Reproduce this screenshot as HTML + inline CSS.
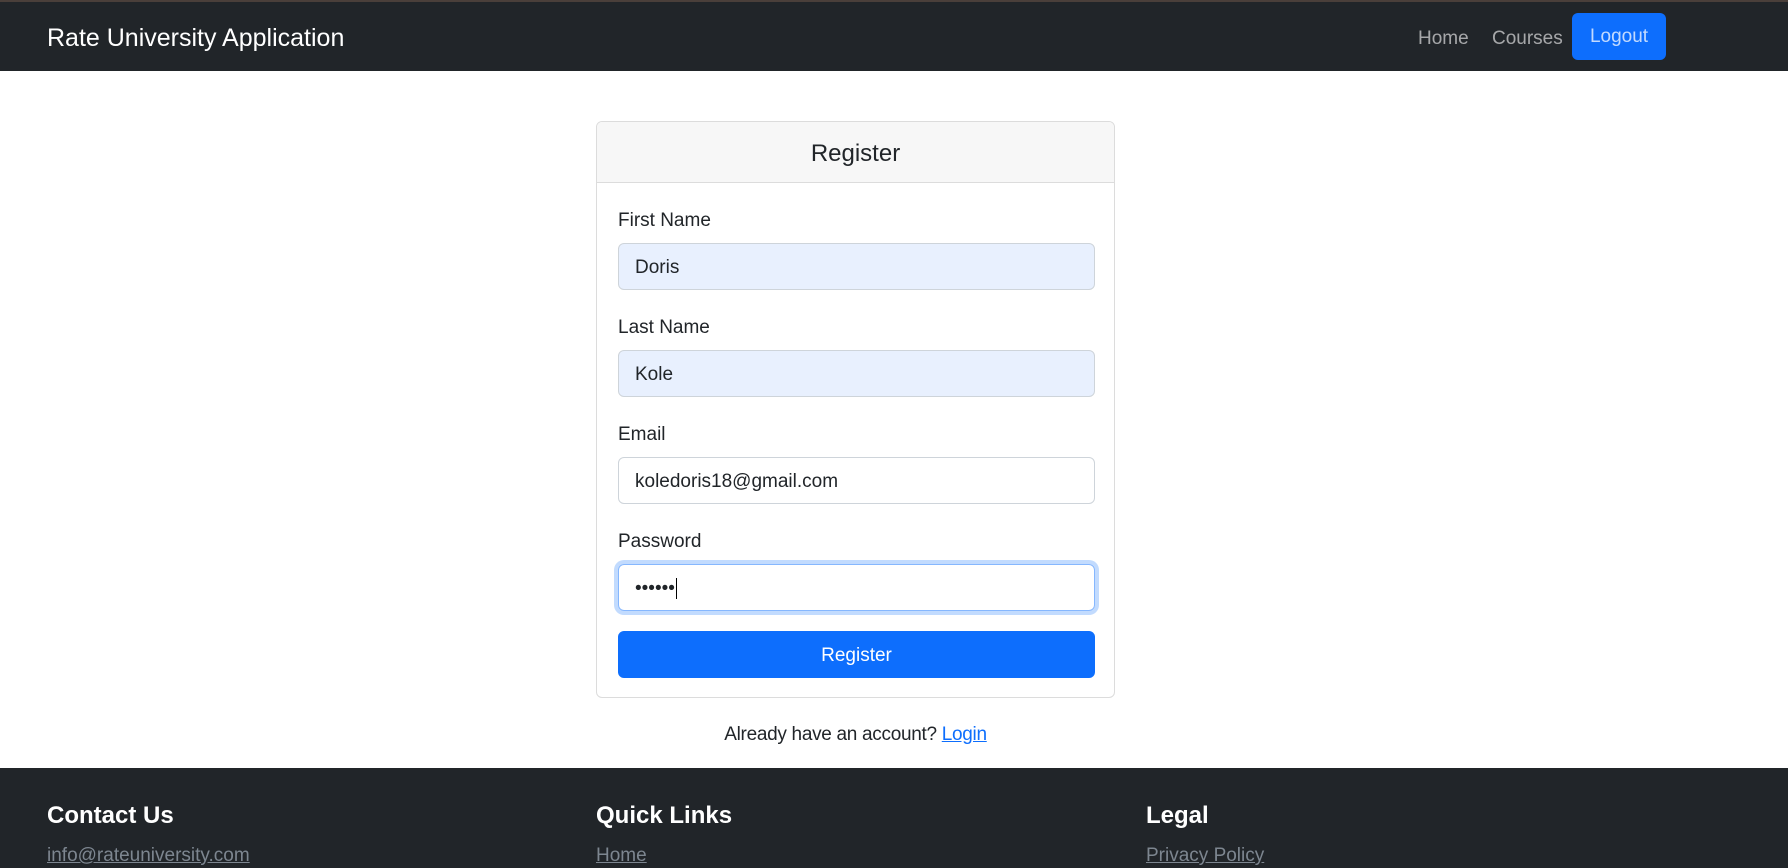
<!DOCTYPE html>
<html><head><meta charset="utf-8"><style>
*{box-sizing:border-box;margin:0;padding:0}
body{width:1788px;height:868px;overflow:hidden;font-family:"Liberation Sans",sans-serif;color:#212529;background:#fff;position:relative}
.nav{position:absolute;left:0;top:0;width:1788px;height:71px;background:#212529;border-top:2px solid #4a3f3a}
.brand{position:absolute;left:47px;top:22px;font-size:25px;color:#fff}
.nl{position:absolute;top:26px;font-size:19px;color:rgba(255,255,255,.6)}
.logout{position:absolute;left:1572px;top:11px;width:94px;height:47px;background:#0d6efd;border-radius:6px;color:rgba(255,255,255,.75);font-size:19px;line-height:47px;text-align:center}
.card{position:absolute;left:596px;top:121px;width:519px;height:577px;border:1px solid #dcdcdc;border-radius:6px;overflow:hidden}
.ch{height:61px;background:#f7f7f7;border-bottom:1px solid #dcdcdc;text-align:center;font-size:24px;line-height:64px}
.lbl{position:absolute;left:21px;font-size:19px}
.inp{position:absolute;left:21px;width:477px;height:47px;border:1px solid #ced4da;border-radius:6px;font-size:19px;line-height:47px;padding-left:16px;color:#212529}
.af{background:#e8f0fe}
.focus{border-color:#86b7fe;box-shadow:0 0 0 4px #c2dbfe}
.btn{position:absolute;left:21px;top:509px;width:477px;height:47px;background:#0d6efd;border-radius:6px;color:#fff;font-size:19px;line-height:50px;text-align:center}
.al{position:absolute;left:596px;width:519px;top:724px;text-align:center;font-size:19px;letter-spacing:-0.3px;white-space:nowrap}
.al a{color:#0d6efd;text-decoration:underline}
.foot{position:absolute;left:0;top:768px;width:1788px;height:100px;background:#212529}
.fh{position:absolute;top:34px;font-size:24px;font-weight:bold;color:#fff}
.fl{position:absolute;top:77px;font-size:19px;color:#7d8690;text-decoration:underline}
</style></head><body>
<div class="nav">
<div class="brand">Rate University Application</div>
<div class="nl" style="left:1418px">Home</div>
<div class="nl" style="left:1492px">Courses</div>
<div class="logout">Logout</div>
</div>
<div class="card">
<div class="ch">Register</div>
<div class="lbl" style="top:88px">First Name</div>
<div class="inp af" style="top:121px">Doris</div>
<div class="lbl" style="top:195px">Last Name</div>
<div class="inp af" style="top:228px">Kole</div>
<div class="lbl" style="top:302px">Email</div>
<div class="inp" style="top:335px">koledoris18@gmail.com</div>
<div class="lbl" style="top:409px">Password</div>
<div class="inp focus" style="top:442px">••••••<span style="border-left:1px solid #000;margin-left:1px"></span></div>
<div class="btn">Register</div>
</div>
<div class="al">Already have an account? <a>Login</a></div>
<div class="foot">
<div class="fh" style="left:47px">Contact Us</div>
<div class="fh" style="left:596px">Quick Links</div>
<div class="fh" style="left:1146px">Legal</div>
<div class="fl" style="left:47px">info@rateuniversity.com</div>
<div class="fl" style="left:596px">Home</div>
<div class="fl" style="left:1146px">Privacy Policy</div>
</div>
</body></html>
